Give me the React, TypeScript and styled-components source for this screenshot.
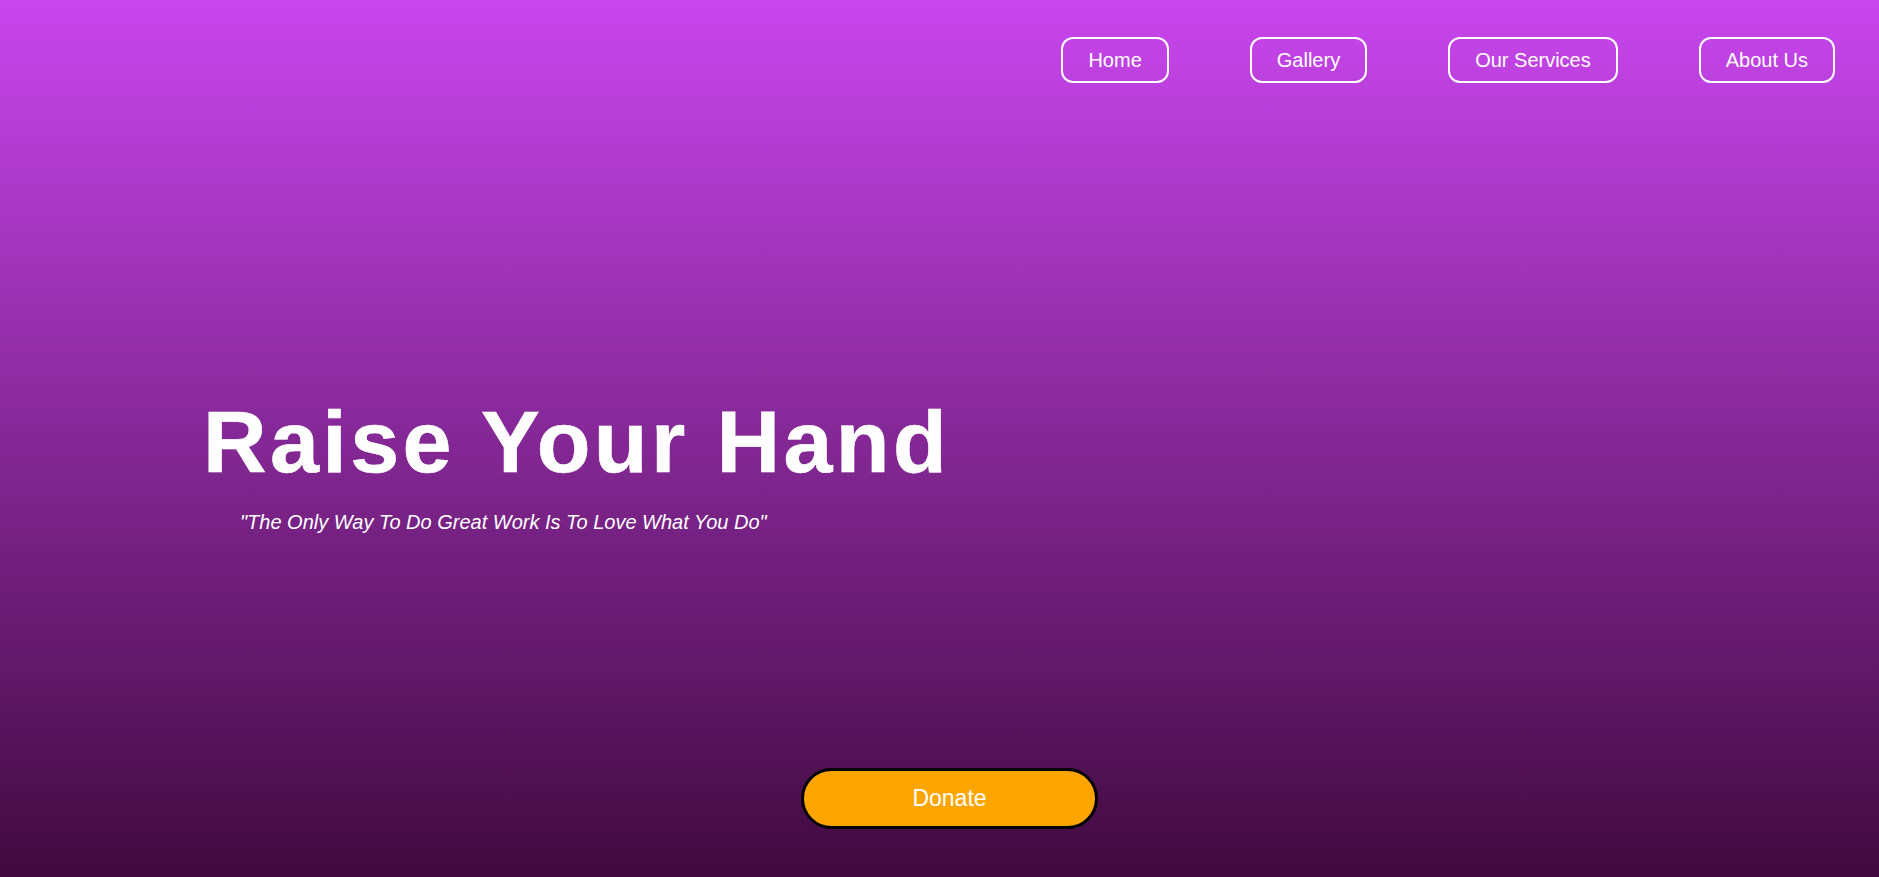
import React from "react";
import styled, { createGlobalStyle } from "styled-components";

const Global = createGlobalStyle`
  html, body { margin: 0; padding: 0; }
  body { font-family: "Liberation Sans", Arial, sans-serif; }
`;

const Page = styled.div`
  box-sizing: border-box;
  height: 100vh;
  min-height: 877px;
  display: flex;
  flex-direction: column;
  background: linear-gradient(to bottom, #c946ee 0%, #400a3e 100%);
  color: #fff;
`;

const Nav = styled.nav`
  display: flex;
  justify-content: flex-end;
  gap: 81px;
  padding: 37px 44px 0 0;
`;

const NavButton = styled.a`
  box-sizing: border-box;
  height: 46px;
  display: flex;
  align-items: center;
  padding: 0 25px;
  border: 2px solid #fff;
  border-radius: 12px;
  font-size: 20px;
  color: #fff;
  text-decoration: none;
  cursor: pointer;
`;

const Hero = styled.section`
  padding-left: 203px;
  margin-top: 308px;
`;

const Title = styled.h1`
  margin: 0;
  font-size: 88px;
  line-height: 101px;
  font-weight: 700;
  letter-spacing: 3.4px;
  -webkit-text-stroke: 0.6px #fff;
`;

const Quote = styled.p`
  margin: 19px 0 0 37px;
  font-size: 20px;
  font-style: italic;
`;

const DonateRow = styled.div`
  margin-top: auto;
  display: flex;
  justify-content: center;
  padding: 0 0 48px 20px;
`;

const DonateButton = styled.button`
  box-sizing: border-box;
  width: 297px;
  height: 61px;
  border: 3px solid #000;
  border-radius: 31px;
  background: #ffa500;
  color: #fff;
  font-family: "Liberation Sans", Arial, sans-serif;
  font-size: 23px;
  cursor: pointer;
`;

export default function App() {
  return (
    <>
      <Global />
      <Page>
        <Nav>
          <NavButton>Home</NavButton>
          <NavButton>Gallery</NavButton>
          <NavButton>Our Services</NavButton>
          <NavButton>About Us</NavButton>
        </Nav>
        <Hero>
          <Title>Raise Your Hand</Title>
          <Quote>"The Only Way To Do Great Work Is To Love What You Do"</Quote>
        </Hero>
        <DonateRow>
          <DonateButton>Donate</DonateButton>
        </DonateRow>
      </Page>
    </>
  );
}
